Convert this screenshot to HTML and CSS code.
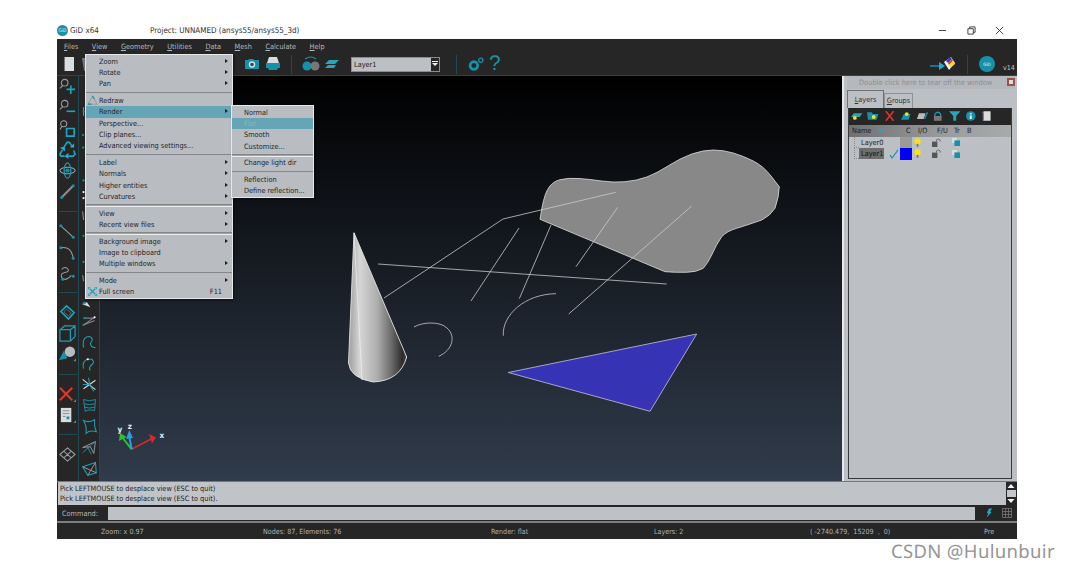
FILE: index.html
```html
<!DOCTYPE html>
<html lang="en">
<head>
<meta charset="utf-8">
<title>GiD x64</title>
<link rel="stylesheet" href="styles.css">
</head>
<body>
<header class="titlebar">
  <svg class="app-logo" viewBox="0 0 10 10"><circle cx="5" cy="5" r="5" class="f-teal"/><text x="5" y="6.6" class="logo-text">GiD</text></svg>
  <span class="app-name">GiD x64</span>
  <span class="project">Project: UNNAMED (ansys55/ansys55_3d)</span>
  <div class="winctl">
    <svg viewBox="0 0 10 10"><path d="M1 5H9" class="s-dark"/></svg>
    <svg viewBox="0 0 10 10"><path d="M1 3H7V9H1ZM3 3V1H9V7H7" class="s-dark"/></svg>
    <svg viewBox="0 0 10 10"><path d="M1 1L9 9M9 1L1 9" class="s-dark"/></svg>
  </div>
</header>

<div class="app">
  <nav class="menubar">
    <span><u>F</u>iles</span><span><u>V</u>iew</span><span><u>G</u>eometry</span><span><u>U</u>tilities</span><span><u>D</u>ata</span><span><u>M</u>esh</span><span><u>C</u>alculate</span><span><u>H</u>elp</span>
  </nav>

  <div class="toolbar">
    <svg class="tb-ic" viewBox="0 0 16 16"><path d="M4 1H13V15H3V2Z" class="f-paper"/><path d="M4 1V15H3V2Z" class="f-grey"/></svg>
    <svg class="tb-ic tb-open" viewBox="0 0 16 16"><path d="M1 2H15L13 15H3Z" class="f-grey"/></svg>
    <svg class="tb-ic tb-cam" viewBox="0 0 16 16"><path d="M1 4H4L5 3H9L10 4H15V13H1Z" class="f-teal"/><circle cx="8" cy="8.5" r="3.2" class="f-paper"/><circle cx="8" cy="8.5" r="1.8" class="f-teal-d"/></svg>
    <svg class="tb-ic" viewBox="0 0 16 16"><path d="M4 1H12L14 7H2Z" class="f-paper"/><path d="M1 7H15V12H13L12 14H4L3 12H1Z" class="f-teal"/></svg>
    <i class="tb-sep tb-sep-a"></i>
    <svg class="tb-ic tb-bino" viewBox="0 0 18 16"><circle cx="5" cy="10" r="4.5" class="f-teal"/><circle cx="13" cy="10" r="4.5" class="f-grey"/><path d="M3 3Q9 -1 14 3" class="s-teal"/></svg>
    <svg class="tb-ic tb-plane" viewBox="0 0 16 16"><path d="M5 4H15L11 8H1ZM4 9H12L10 12H1Z" class="f-teal-l"/></svg>
    <div class="layer-select"><span>Layer1</span><b><svg viewBox="0 0 8 8"><path d="M1 3H7L4 6Z" class="f-white"/><path d="M1 1H7V2H1Z" class="f-white"/></svg></b></div>
    <i class="tb-sep tb-sep-b"></i>
    <svg class="tb-ic tb-gear" viewBox="0 0 16 16"><circle cx="6.5" cy="9" r="3.6" class="s-teal-w"/><circle cx="13" cy="4" r="2" class="s-teal"/></svg>
    <span class="help">?</span>
    <svg class="tb-rainbow" viewBox="0 0 26 16"><path d="M0 10H11" class="s-cyan"/><path d="M9 6L15 10L9 14Z" class="f-cyan"/><path d="M14 6L21 1L25 7L19 14Z" class="f-white"/><path d="M16 5L20 1L22 3L18 7Z" class="f-blue"/><path d="M18 7L22 3L23 5L19 9Z" class="f-red"/><path d="M19 9L23 5L25 8L20 12Z" class="f-yellow"/></svg>
    <i class="tb-sep tb-sep-c"></i>
    <svg class="tb-logo" viewBox="0 0 16 16"><circle cx="8" cy="8" r="8" class="f-teal"/><text x="8" y="10" class="logo-text-w">GiD</text></svg>
    <span class="ver">v14</span>
  </div>

  <div class="workspace">
    <aside class="tools-a">
      <div class="tool"><svg viewBox="0 0 20 20"><circle cx="7" cy="6" r="3.5" class="s-grey"/><path d="M5 9L2 12" class="s-grey"/><path d="M9 13H18M13.5 9V18" class="s-cyan-w"/></svg></div>
      <div class="tool"><svg viewBox="0 0 20 20"><circle cx="7" cy="6" r="3.5" class="s-grey"/><path d="M5 9L2 12" class="s-grey"/><path d="M9 14H18" class="s-cyan-w"/></svg></div>
      <div class="tool"><svg viewBox="0 0 20 20"><circle cx="6" cy="5" r="3.2" class="s-grey"/><path d="M4 8L2 11" class="s-grey"/><path d="M9 10H17V18H9Z" class="s-cyan-w"/></svg></div>
      <div class="tool"><svg viewBox="0 0 20 20"><path d="M6 8L9.500 2.500H12L15 7M16.500 11L18 15L16 17H11M7 17H3L2 15L4.500 10.500" class="s-cyan-w"/><path d="M12.500 8L17 8L17 3.500ZM11 13.500V20L7 17ZM2 8L7 7L7.500 12Z" class="f-cyan"/></svg></div>
      <div class="tool"><svg viewBox="0 0 20 20"><ellipse cx="10" cy="10" rx="8" ry="3.5" class="s-grey"/><ellipse cx="10" cy="10" rx="3.5" ry="8" class="s-cyan"/><circle cx="10" cy="10" r="2.2" class="f-teal"/></svg></div>
      <div class="tool"><svg viewBox="0 0 20 20"><path d="M3 17L16 4" class="s-grey-w"/><circle cx="4" cy="16" r="1.6" class="f-teal"/><circle cx="16" cy="4" r="1.6" class="f-teal"/></svg></div>
      <i class="tool-sep"></i>
      <div class="tool"><svg viewBox="0 0 20 20"><path d="M3 4L16 16" class="s-grey"/><circle cx="3" cy="4" r="1.6" class="f-teal"/><circle cx="16" cy="16" r="1.6" class="f-teal"/></svg></div>
      <div class="tool"><svg viewBox="0 0 20 20"><path d="M3 5Q14 3 16 16" class="s-grey"/><circle cx="3" cy="5" r="1.6" class="f-teal"/><circle cx="16" cy="16" r="1.6" class="f-teal"/></svg></div>
      <div class="tool"><svg viewBox="0 0 20 20"><path d="M5 16Q1 10 7 9Q14 8 9 4Q5 3 4 6M5 16Q10 17 14 12" class="s-grey"/><circle cx="16" cy="13" r="1.6" class="f-teal"/><circle cx="5" cy="16" r="1.6" class="f-teal"/></svg></div>
      <i class="tool-sep"></i>
      <div class="tool"><svg viewBox="0 0 20 20"><path d="M3 9L9 3L17 10L11 17Z" class="s-cyan-w"/><path d="M6 9.500L9 6.500L14 10.500L11 13.500Z" class="s-grey-t"/></svg></div>
      <div class="tool"><svg viewBox="0 0 20 20"><path d="M2 6L7 2H18V13L13 18H2ZM2 6H13V18M13 6L18 2" class="s-cyan"/></svg></div>
      <div class="tool"><svg viewBox="0 0 20 20"><circle cx="12.500" cy="7" r="5.500" class="f-grey-l"/><path d="M6 6L10 14L1 16Z" class="f-teal"/><path d="M16 17H19V14Z" class="f-grey"/></svg></div>
      <i class="tool-sep"></i>
      <div class="tool"><svg viewBox="0 0 20 20"><path d="M2 3L15 16M15 3L2 16" class="s-red"/><path d="M16 18H19V15Z" class="f-grey"/></svg></div>
      <div class="tool"><svg viewBox="0 0 20 20"><path d="M3 2H14V17H3Z" class="f-paper"/><path d="M5 5H12M5 8H12M5 11H8" class="s-grey-t"/><path d="M9 11H12V14H9Z" class="f-teal"/><path d="M16 18H19V15Z" class="f-grey"/></svg></div>
      <i class="tool-sep"></i>
      <div class="tool"><svg viewBox="0 0 20 20"><path d="M2 10L10 3L18 10L10 17ZM6 6.500L14 13.500M10 3L18 10M6 13.500L14 6.500" class="s-grey"/></svg></div>
    </aside>
    <aside class="tools-b">
      <div class="tool"><svg viewBox="0 0 20 20"><path d="M3 5L3 15" class="s-grey"/><circle cx="3" cy="10" r="1.300" class="f-teal"/></svg></div>
      <div class="tool"><svg viewBox="0 0 20 20"><circle cx="2.500" cy="13" r="1.300" class="f-teal"/></svg></div>
      <div class="tool"><svg viewBox="0 0 20 20"><circle cx="2.500" cy="3" r="1.300" class="f-teal"/></svg></div>
      <div class="tool"><svg viewBox="0 0 20 20"><path d="M3 6V13" class="f-grey"/><circle cx="3" cy="17" r="1.300" class="f-teal"/></svg></div>
      <div class="tool"><svg viewBox="0 0 20 20"><circle cx="3" cy="6" r="1.300" class="f-white"/><circle cx="3" cy="13" r="1.300" class="f-white"/></svg></div>
      <div class="tool"><svg viewBox="0 0 20 20"><path d="M2 4L3 14" class="s-grey"/></svg></div>
      <div class="tool"><svg viewBox="0 0 20 20"><circle cx="3" cy="8" r="1.300" class="f-teal"/></svg></div>
      <div class="tool"><svg viewBox="0 0 20 20"><circle cx="3" cy="14" r="1.300" class="f-teal"/></svg></div>
      <div class="tool"><svg viewBox="0 0 20 20"><path d="M2 5L3 12" class="s-grey"/></svg></div>
      <div class="tool"><svg viewBox="0 0 20 20"><path d="M1 14L7 12L11 18" class="f-paper"/><circle cx="4" cy="13" r="1.500" class="f-teal"/></svg></div>
      <div class="tool"><svg viewBox="0 0 20 20"><path d="M3 14L16 5M4 6H16M3 14L16 9" class="s-grey"/><circle cx="4" cy="6" r="1.300" class="f-teal"/><circle cx="3" cy="14" r="1.300" class="f-teal"/><circle cx="16" cy="5" r="1.300" class="f-white"/></svg></div>
      <div class="tool"><svg viewBox="0 0 20 20"><path d="M3 16Q1 3 10 3Q16 5 11 11Q11 16 17 16" class="s-cyan"/></svg></div>
      <div class="tool"><svg viewBox="0 0 20 20"><path d="M3 16Q1 8 7 5M7 5H13M13 5Q17 9 11 13Q9 16 11 18" class="s-cyan"/><circle cx="8" cy="5" r="1.300" class="f-white"/></svg></div>
      <div class="tool"><svg viewBox="0 0 20 20"><path d="M2 4L17 16M3 15L17 5" class="s-white"/><path d="M9 2L10 10L15 18M10 10L2 10" class="s-cyan"/></svg></div>
      <div class="tool"><svg viewBox="0 0 20 20"><path d="M3 3Q10 6 17 3L16 16Q9 14 5 17ZM4 8Q10 10 16 8M4 12Q10 14 16 12" class="s-cyan-t"/></svg></div>
      <div class="tool"><svg viewBox="0 0 20 20"><path d="M3 3Q9 6 16 2Q15 9 18 16Q10 14 6 18Q7 10 3 3Z" class="s-cyan"/></svg></div>
      <div class="tool"><svg viewBox="0 0 20 20"><path d="M2 10L17 3L15 17L11 9Z" class="s-grey"/><path d="M2 16L17 3M7 8L12 18" class="s-cyan-t"/></svg></div>
      <div class="tool"><svg viewBox="0 0 20 20"><path d="M2 8L17 3L18 15L8 18Z" class="s-cyan"/><path d="M2 8L18 15M8 18L17 3" class="s-grey"/></svg></div>
    </aside>

    <main class="viewport">
      <svg class="scene" viewBox="100 76 742 405" preserveAspectRatio="none">
        <defs>
          <linearGradient id="cone" x1="348" x2="407" y1="0" y2="0" gradientUnits="userSpaceOnUse">
            <stop offset="0" stop-color="#9a9a9a"/><stop offset=".2" stop-color="#d6d6d6"/><stop offset=".5" stop-color="#adadad"/><stop offset=".75" stop-color="#666"/><stop offset=".93" stop-color="#2a2a2a"/><stop offset="1" stop-color="#555"/>
          </linearGradient>
        </defs>
        <path class="blob" d="M540,219.3 Q543.3,196.7 547.5,189.7 Q551.7,181.7 560,179.7 Q568.3,177.7 579,178.5 Q590,179.3 601.7,181 Q613.3,182.700 625,181.700 Q636.7,180.700 646.700,177 Q656.700,173.300 668.300,165.800 Q680,158.300 691.700,154 Q703.300,150 713.300,150 Q723.300,150 733.300,153 Q743.300,156 753.300,161 Q763.300,166 771,176 L779.300,186.700 Q779,197 775,208.300 Q770,216 761.700,220 Q749,224.500 736.700,228.300 Q727,231 721.700,236.700 Q716,245 711.700,255 Q708,263 703.300,268.300 Q696,272.300 686.700,272.300 Q675,272.500 665,271.700 Z"/>
        <path class="tri" d="M508.300,372.500 L696.700,334 L650,411.300 Z"/>
        <path class="cone" d="M354,232.700 L348.500,363 Q350,378 373,382 Q400,381 406.700,357 Z"/>
        <path class="wire" d="M354,233 L362,380"/>
        <g class="wires">
          <path d="M384,298 L503,219 L615.700,192.300"/>
          <path d="M471,301 L519,228"/>
          <path d="M519.300,298.700 L551,225"/>
          <path d="M576,266.700 L617.700,207.300"/>
          <path d="M568.700,314 L691.700,206"/>
          <path d="M378,264 L666.700,284"/>
          <path d="M503.300,335.700 C502,315 525,294 556,293.700"/>
          <path d="M414,327 C422,322 440,321 447,328 C456,336 453,350 438.700,356.300"/>
        </g>
        <path class="ax-x" d="M131.700,449.300 L151,439"/><path class="ax-xh" d="M149,434 L156,437.500 L152,443.500Z"/>
        <path class="ax-y" d="M131.700,449.300 L122,437"/><path class="ax-yh" d="M119,441 L120,433 L126.500,437Z"/>
        <path class="ax-z" d="M131.700,449.300 L129.300,437"/><path class="ax-zh" d="M126,439 L129.300,430 L133,438Z"/>
        <text class="ax-l" x="159.500" y="437.500">x</text>
        <text class="ax-l" x="117.500" y="431.500">y</text>
        <text class="ax-l" x="127.800" y="429">z</text>
      </svg>
    </main>

    <aside class="panel">
      <div class="tear"><span>Double click here to tear off the window</span><svg viewBox="0 0 8 8"><path d="M0 0H8V8H0Z" class="f-closer"/><path d="M2 2H6V6H2Z" class="f-paper"/></svg></div>
      <div class="tabs"><span class="tab active"><u>L</u>ayers</span><span class="tab"><u>G</u>roups</span></div>
      <div class="layers">
        <div class="layers-bar">
          <svg viewBox="0 0 12 10"><path d="M3 2H12L9 6H0Z" class="f-teal-l"/><circle cx="4" cy="7" r="2" class="f-yellow"/></svg>
          <svg viewBox="0 0 12 10"><path d="M0 1H5L6 3H12L10 9H1Z" class="f-teal"/><circle cx="7" cy="6" r="2" class="f-yellow"/></svg>
          <svg viewBox="0 0 12 10"><path d="M2 0L10 10M10 0L2 10" class="s-red-t"/></svg>
          <svg viewBox="0 0 12 10"><path d="M1 9L4 3H11L9 9Z" class="f-teal"/><circle cx="7" cy="3" r="2" class="f-yellow"/></svg>
          <svg viewBox="0 0 12 10"><path d="M3 2H10L8 8H1Z" class="f-grey-l"/><path d="M9 8L12 1" class="s-cyan"/></svg>
          <svg viewBox="0 0 12 10"><path d="M3 5V3Q6 -1 9 3V5" class="s-cyan"/><path d="M2 5H10V10H2Z" class="f-grey"/></svg>
          <svg viewBox="0 0 12 10"><path d="M0 0H12L7.500 5V10H4.500V5Z" class="f-teal-l"/></svg>
          <svg viewBox="0 0 12 10"><circle cx="6" cy="5" r="5" class="f-teal"/><path d="M5 2H7V3.500H5ZM5 4.500H7V8H5Z" class="f-white"/></svg>
          <svg viewBox="0 0 12 10"><path d="M3 0H10V10H2V1Z" class="f-paper"/><path d="M3 0V10H2V1Z" class="f-grey"/></svg>
        </div>
        <div class="layers-head">
          <span class="h-name">Name</span><svg class="h-arrow" viewBox="0 0 8 4"><path d="M0 0H8L4 4Z" class="f-teal-l"/></svg>
          <span class="h-c">C</span><span class="h-io">I/O</span><span class="h-fu">F/U</span><span class="h-tr">Tr</span><span class="h-b">B</span>
        </div>
        <div class="row">
          <span class="tree"></span><span class="lname">Layer0</span><span class="check"></span><span class="swatch swatch-grey"></span>
          <svg class="bulb" viewBox="0 0 8 10"><circle cx="4" cy="3.700" r="3.700" class="f-yellow"/><path d="M3 6.500H5V10H3Z" class="f-grey"/></svg>
          <svg class="lock" viewBox="0 0 10 10"><path d="M0 4H6V10H0Z" class="f-lock"/><path d="M5 4V2Q7 0 9 2V4" class="s-lock"/></svg>
          <svg class="trans" viewBox="0 0 10 10"><path d="M0 0H6V6H0Z" class="f-paper"/><path d="M3 3H10V10H3Z" class="f-teal"/></svg>
        </div>
        <div class="row">
          <span class="tree tree-b"></span><span class="lname sel">Layer1</span>
          <svg class="check" viewBox="0 0 10 10"><path d="M1 6L3 9L9 1" class="s-teal"/></svg>
          <span class="swatch swatch-blue"></span>
          <svg class="bulb" viewBox="0 0 8 10"><circle cx="4" cy="3.700" r="3.700" class="f-yellow"/><path d="M3 6.500H5V10H3Z" class="f-grey"/></svg>
          <svg class="lock" viewBox="0 0 10 10"><path d="M0 4H6V10H0Z" class="f-lock"/><path d="M5 4V2Q7 0 9 2V4" class="s-lock"/></svg>
          <svg class="trans" viewBox="0 0 10 10"><path d="M0 0H6V6H0Z" class="f-paper"/><path d="M3 3H10V10H3Z" class="f-teal"/></svg>
        </div>
      </div>
    </aside>
  </div>

  <div class="messages">
    <div class="log"><div>Pick LEFTMOUSE to desplace view (ESC to quit)</div><div>Pick LEFTMOUSE to desplace view (ESC to quit).</div></div>
    <div class="scroll">
      <svg viewBox="0 0 10 8"><path d="M1.500 6L5 2L8.500 6Z" class="f-white"/></svg>
      <span class="thumb"></span>
      <svg viewBox="0 0 10 8"><path d="M1.500 2L5 6L8.500 2Z" class="f-white"/></svg>
    </div>
  </div>
  <div class="command">
    <label>Command:</label><div class="cmd-input"></div>
    <svg class="bolt" viewBox="0 0 8 12"><path d="M4 0H8L5.500 4.500H7.500L1 12L3 6H1Z" class="f-teal-l"/></svg>
    <svg class="gridic" viewBox="0 0 10 10"><path d="M0.500 0.500H9.500V9.500H0.500ZM3.500 0.500V9.500M6.500 0.500V9.500M0.500 3.500H9.500M0.500 6.500H9.500" class="s-grey-t"/></svg>
  </div>
  <footer class="status">
    <span class="st-zoom">Zoom: x 0.97</span><span class="st-nodes">Nodes: 87, Elements: 76</span><span class="st-render">Render: flat</span><span class="st-layers">Layers: 2</span><span class="st-coords">( -2740.479,  15209  ,  0)</span><span>Pre</span>
  </footer>

  <div class="menu menu-view">
    <div class="mi has">Zoom</div><div class="mi has">Rotate</div><div class="mi has">Pan</div>
    <i class="msep"></i>
    <div class="mi"><svg class="mi-ic" viewBox="0 0 12 12"><path d="M6 1L11 10H1Z" class="s-grey"/><path d="M1 10H5M6 1L8 4.500" class="s-teal"/></svg>Redraw</div>
    <div class="mi has on">Render</div><div class="mi">Perspective...</div><div class="mi">Clip planes...</div><div class="mi">Advanced viewing settings...</div>
    <i class="msep"></i>
    <div class="mi has">Label</div><div class="mi has">Normals</div><div class="mi has">Higher entities</div><div class="mi has">Curvatures</div>
    <i class="msep"></i>
    <div class="mi has">View</div><div class="mi has">Recent view files</div>
    <i class="msep"></i>
    <div class="mi has">Background image</div><div class="mi">Image to clipboard</div><div class="mi has">Multiple windows</div>
    <i class="msep"></i>
    <div class="mi has">Mode</div>
    <div class="mi"><svg class="mi-ic" viewBox="0 0 12 12"><path d="M1 1H4L1 4ZM11 1H8L11 4ZM1 11H4L1 8ZM11 11H8L11 8Z" class="f-cyan"/><path d="M3 3L9 9M9 3L3 9" class="s-cyan"/></svg>Full screen<span class="key">F11</span></div>
  </div>

  <div class="menu menu-render">
    <div class="mi">Normal</div><div class="mi on off">Flat</div><div class="mi">Smooth</div><div class="mi">Customize...</div>
    <i class="msep"></i>
    <div class="mi">Change light dir</div>
    <i class="msep"></i>
    <div class="mi">Reflection</div><div class="mi">Define reflection...</div>
  </div>
</div>
<div class="watermark">CSDN @Hulunbuir</div>
</body>
</html>
```

FILE: styles.css
```css
* { box-sizing: border-box; }
html, body { margin: 0; height: 100%; }
body { width: 1070px; height: 569px; overflow: hidden; background: #fff; font-family: "DejaVu Sans Condensed", "DejaVu Sans", sans-serif; font-stretch: condensed; font-size: 7.300px; color: #24262a; text-rendering: geometricPrecision; }
u { text-underline-offset: 1px; }
svg { display: block; overflow: visible; }

/* shared svg paints */
.f-teal { fill: #1592a9; } .f-teal-d { fill: #0d5666; } .f-teal-l { fill: #2aa4bb; } .f-cyan { fill: #19b5d6; }
.f-white { fill: #f2f2f2; } .f-paper { fill: #d9dde0; } .f-grey { fill: #777; } .f-grey-l { fill: #b9bcbf; }
.f-blue { fill: #2f3fd0; } .f-red { fill: #d63a2a; } .f-yellow { fill: #f7e11c; } .f-closer { fill: #9c5148; } .f-lock { fill: #555; }
.s-dark, .s-teal, .s-teal-w, .s-cyan, .s-cyan-w, .s-cyan-t, .s-grey, .s-grey-w, .s-grey-t, .s-red, .s-red-t, .s-white, .s-lock { fill: none; }
.s-dark { stroke: #333; stroke-width: 1; }
.s-teal { stroke: #1592a9; stroke-width: 1.2; } .s-teal-w { stroke: #1592a9; stroke-width: 2.6; }
.s-cyan { stroke: #1a9db6; stroke-width: 1.3; } .s-cyan-w { stroke: #1aa6c2; stroke-width: 1.7; } .s-cyan-t { stroke: #1a9db6; stroke-width: 1; }
.s-grey { stroke: #9a9da0; stroke-width: 1.1; } .s-grey-w { stroke: #8a8d90; stroke-width: 2.2; } .s-grey-t { stroke: #777; stroke-width: .8; }
.s-red { stroke: #e0352b; stroke-width: 2.2; } .s-red-t { stroke: #e0352b; stroke-width: 1.6; } .s-white { stroke: #ddd; stroke-width: 1.2; }
.s-lock { stroke: #666; stroke-width: 1; }

/* title bar */
.titlebar { height: 39px; padding: 22px 0 0 57px; display: flex; align-items: center; color: #333; font-size: 8px; }
.app-logo { width: 11px; height: 11px; }
.logo-text, .logo-text-w { fill: #e6f4f7; text-anchor: middle; font-size: 4.5px; }
.app-name { margin-left: 2px; width: 80px; }
.project { flex: 1; }
.winctl { display: flex; gap: 19.500px; margin-right: 66px; }
.winctl svg { width: 9px; height: 9px; }

/* app shell */
.app { position: relative; margin-left: 57px; width: 960px; height: 500px; background: #262626; display: flex; flex-direction: column; }
.menubar { height: 15px; padding-left: 7px; display: flex; align-items: center; gap: 13.500px; color: #b6b8ba; }
.toolbar { height: 22px; padding-left: 4px; display: flex; align-items: center; border-bottom: 1px solid #1d4a55; }
.tb-ic { width: 16px; height: 16px; flex: none; }
.tb-open { margin-left: 4px; }
.tb-cam { margin-left: 147px; margin-right: 5px; }
.tb-sep { width: 1px; height: 19px; background: #1d4a55; flex: none; }
.tb-sep-a { margin: 0 10px; }
.tb-bino { width: 18px; margin-right: 4px; }
.tb-plane { margin-right: 11px; }
.layer-select { width: 89px; height: 15px; background: #bcbfc3; border: 1px solid #8a8c8f; display: flex; align-items: center; padding-left: 2px; color: #222; justify-content: space-between; flex: none; }
.layer-select b { width: 8px; height: 13px; background: #262626; display: flex; align-items: center; }
.layer-select b svg { width: 8px; height: 8px; }
.tb-sep-b { margin: 0 10px 0 16px; }
.tb-gear { width: 17px; height: 17px; }
.help { margin-left: 5px; font-family: "Liberation Sans", sans-serif; font-size: 21px; line-height: 20px; color: #1592a9; width: 12px; }
.tb-rainbow { width: 26px; height: 16px; margin-left: 429px; }
.tb-sep-c { margin: 0 11px; }
.tb-logo { width: 16px; height: 16px; }
.ver { margin: 8px 0 0 8px; font-size: 7px; color: #c8cacc; }

.workspace { height: 405px; display: flex; }
.tools-a { width: 21px; padding-top: .5px; display: flex; flex-direction: column; align-items: center; }
.tool { height: 21px; width: 100%; display: flex; align-items: center; justify-content: center; flex: none; }
.tool svg { width: 19px; height: 19px; flex: none; }
.tool-sep { height: 18.500px; width: 100%; flex: none; background: linear-gradient(#1d4a55, #1d4a55) center / 18px 1px no-repeat; }
.tools-b { width: 22px; border-left: 1px solid #1d4a55; border-right: 1px solid #1d4a55; padding-bottom: 2px; display: flex; flex-direction: column; justify-content: flex-end; }
.tools-b .tool svg { width: 17px; height: 17px; }

/* viewport */
.viewport { width: 742px; background: linear-gradient(#000, #303b4b); }
.scene { width: 100%; height: 100%; }
.blob { fill: #888; stroke: #ddd; stroke-width: .8; }
.tri { fill: #3733b5; stroke: #c4c4d8; stroke-width: .8; }
.cone { fill: url(#cone); stroke: #e4e4e4; stroke-width: .9; }
.wire { stroke: #eee; stroke-width: .8; fill: none; }
.wires path { fill: none; stroke: #c8cacc; stroke-width: .8; }
.ax-x { stroke: #d52a25; stroke-width: 1.6; fill: none; } .ax-xh { fill: #d52a25; }
.ax-y { stroke: #31c02c; stroke-width: 2; fill: none; } .ax-yh { fill: #31c02c; }
.ax-z { stroke: #2b9de0; stroke-width: 2; fill: none; } .ax-zh { fill: #2b9de0; }
.ax-l { fill: #eee; font-size: 8px; font-weight: 700; }

/* layers panel */
.panel { width: 175px; background: #bcbfc3; border-left: 2px solid #e8e8e8; padding: 0 5px 2px 3px; display: flex; flex-direction: column; }
.tear { height: 13px; display: flex; align-items: center; justify-content: space-between; background: #b5b8bc; margin-right: -3px; padding: 0 0 0 12px; color: #8c8f93; font-size: 7.400px; }
.tear svg { width: 8px; height: 8px; }
.tabs { height: 18px; margin-top: 1px; display: flex; align-items: flex-end; }
.tab { height: 15px; width: 29px; border: 1px solid #8f9295; border-bottom: 0; display: flex; align-items: center; justify-content: center; color: #333; }
.tab.active { height: 18px; width: 37px; border-color: #6e7073; }
.layers { flex: 1; margin-left: 1px; border: 1px solid #3a3b3d; border-top: 0; }
.layers-bar { height: 17px; background: #262626; display: flex; align-items: center; gap: 4.800px; padding-left: 2px; }
.layers-bar svg { width: 11.500px; height: 10px; flex: none; }
.layers-head { height: 12px; background: linear-gradient(90deg, #6e7072, #9a9c9e 60%, #a8aaac); display: flex; align-items: center; color: #1d1d1d; }
.layers-head span { flex: none; }
.h-name { margin-left: 3px; width: 25px; }
.h-arrow { width: 8px; height: 4px; margin-right: 21px; flex: none; }
.h-c { width: 12px; } .h-io { width: 19px; } .h-fu { width: 17px; } .h-tr { width: 13px; }
.row { height: 11.500px; display: flex; align-items: center; color: #222; }
.tree { height: 11px; border-left: 1px dotted #888; border-bottom: 1px dotted #888; flex: none; margin-left: 5px; width: 5px; }
.lname { width: 25px; padding-left: 2px; line-height: 11px; flex: none; }
.lname.sel { background: #6e6e6e; color: #111; }
.check { width: 10px; height: 10px; margin: 0 1px 0 5px; flex: none; }
.swatch { width: 12px; height: 11.500px; flex: none; }
.swatch-grey { background: #9a9a9a; } .swatch-blue { background: #0000ff; }
.bulb { width: 7px; height: 9px; margin-left: 2px; flex: none; }
.lock { width: 9px; height: 9px; margin-left: 11px; flex: none; }
.trans { width: 8px; height: 8px; margin-left: 11px; flex: none; }

/* bottom */
.messages { height: 25px; display: flex; border-top: 1px solid #777; }
.log { width: 948px; margin-left: 1px; background: #c0c3c7; padding: 2px 2px 0; line-height: 10px; color: #1e1e1e; }
.scroll { width: 10px; background: #262626; display: flex; flex-direction: column; justify-content: center; align-items: center; }
.scroll svg { width: 10px; height: 8px; }
.thumb { width: 9px; height: 7px; background: #c4c7ca; }
.command { height: 18px; display: flex; align-items: center; color: #b5b7b9; border-bottom: 2px solid #7c7e80; }
.command label { width: 51px; padding-left: 5px; }
.cmd-input { width: 867px; height: 13px; background: #bec1c5; }
.bolt { width: 6px; height: 10px; margin-left: 11px; }
.gridic { width: 10px; height: 10px; margin-left: 10px; }
.status { height: 16px; display: flex; align-items: center; padding-left: 44px; color: #b0b2b4; font-size: 7.100px; }
.st-zoom { width: 162px; } .st-nodes { width: 228px; } .st-render { width: 163px; } .st-layers { width: 156px; } .st-coords { width: 174px; white-space: pre; }

/* dropdown menus, over the workspace */
.menu { position: absolute; background: #b9bcc0; border: 1.500px solid #e6e8ea; box-shadow: 1px 1px 2px rgba(0,0,0,.5); padding-top: .8px; }
.menu-view { left: 28px; top: 15px; width: 148px; height: 245px; }
.menu-render { left: 174px; top: 66px; width: 83px; height: 93px; }
.mi { height: 11.330px; line-height: 11.330px; padding-left: 13px; position: relative; white-space: nowrap; }
.menu-render .mi { padding-left: 12px; }
.has::after { content: ""; position: absolute; right: 4px; top: 3px; border-left: 3.500px solid #222; border-top: 2.500px solid transparent; border-bottom: 2.500px solid transparent; }
.on { background: #65a6b6; }
.off { color: #8fb2bb; }
.mi-ic { position: absolute; left: 1px; top: 0; width: 11px; height: 11px; }
.key { position: absolute; right: 10px; top: 0; }
.msep { display: block; height: 5.350px; background: linear-gradient(#85888b, #85888b) 0 2px / 100% 1.500px no-repeat, linear-gradient(#eceeef, #eceeef) 0 3.500px / 100% 1px no-repeat; }

.watermark { padding: 3px 15px 0 0; text-align: right; font-family: "Noto Sans", sans-serif; font-stretch: normal; font-size: 18.500px; line-height: 20px; color: #959595; letter-spacing: .35px; }
```
